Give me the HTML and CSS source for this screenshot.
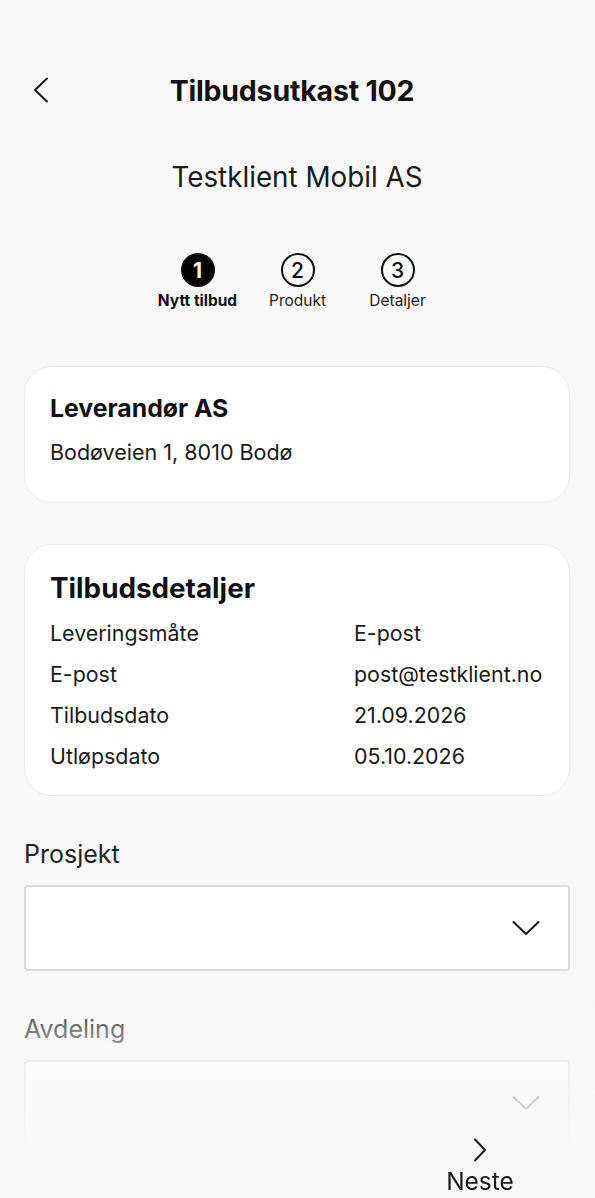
FILE: index.html
```
<!DOCTYPE html>
<html lang="no">
<head>
<meta charset="utf-8">
<title>Tilbudsutkast 102</title>
<link rel="stylesheet" href="styles.css">
</head>
<body>
<div class="page">
  <header class="header">
    <button class="back" aria-label="Tilbake">
      <svg width="16" height="26" viewBox="0 0 16 26"><path d="M14 1.5 L2 13 L14 24.5" fill="none" stroke="#1a1a1a" stroke-width="2" stroke-linecap="round" stroke-linejoin="round"/></svg>
    </button>
    <h1 class="title">Tilbudsutkast 102</h1>
    <span></span>
  </header>

  <div class="client">Testklient Mobil AS</div>

  <div class="steps">
    <div class="step active"><span class="circle">1</span><span class="step-label">Nytt tilbud</span></div>
    <div class="step"><span class="circle">2</span><span class="step-label">Produkt</span></div>
    <div class="step"><span class="circle">3</span><span class="step-label">Detaljer</span></div>
  </div>

  <section class="card supplier">
    <h2 class="card-title small">Leverandør AS</h2>
    <p class="card-text">Bodøveien 1, 8010 Bodø</p>
  </section>

  <section class="card details">
    <h2 class="card-title">Tilbudsdetaljer</h2>
    <dl class="rows">
      <dt>Leveringsmåte</dt><dd>E-post</dd>
      <dt>E-post</dt><dd>post@testklient.no</dd>
      <dt>Tilbudsdato</dt><dd>21.09.2026</dd>
      <dt>Utløpsdato</dt><dd>05.10.2026</dd>
    </dl>
  </section>

  <div class="field">
    <label class="field-label">Prosjekt</label>
    <div class="select">
      <svg width="28" height="16" viewBox="0 0 28 16"><path d="M1.5 2 L14 14 L26.5 2" fill="none" stroke="#1a1a1a" stroke-width="2" stroke-linecap="round" stroke-linejoin="round"/></svg>
    </div>
  </div>

  <div class="field">
    <label class="field-label">Avdeling</label>
    <div class="select">
      <svg width="28" height="16" viewBox="0 0 28 16"><path d="M1.5 2 L14 14 L26.5 2" fill="none" stroke="#1a1a1a" stroke-width="2" stroke-linecap="round" stroke-linejoin="round"/></svg>
    </div>
  </div>
</div>

<div class="fade"></div>
<button class="next">
  <svg width="16" height="24" viewBox="0 0 16 24"><path d="M3 1.5 L13 12 L3 22.5" fill="none" stroke="#1a1a1a" stroke-width="2" stroke-linecap="round" stroke-linejoin="round"/></svg>
  <span>Neste</span>
</button>
</body>
</html>
```
FILE: styles.css
```
* { box-sizing: border-box; }
html, body { margin: 0; padding: 0; }
body {
  background: #f8f8f8;
  font-family: Inter, "Noto Sans", sans-serif;
  color: #1a1a1a;
  width: 595px;
  height: 1198px;
  overflow: hidden;
}
.page { padding: 66px 25px 0 24px; }

.header {
  display: grid;
  grid-template-columns: 60px 1fr 60px;
  align-items: center;
  height: 48px;
}
.back {
  background: none; border: 0; padding: 0 0 0 9px;
  display: flex; align-items: center; height: 48px;
}
.title {
  margin: 0; padding-right: 10px; text-align: center;
  font-size: 28.5px; font-weight: 700; letter-spacing: -0.2px;
  color: #111;
}

.client {
  margin-top: 47px;
  text-align: center;
  font-size: 27.8px; line-height: 32px; font-weight: 400;
}

.steps {
  margin-top: 60px;
  display: flex; justify-content: center;
  padding-left: 1px;
}
.step {
  width: 100px;
  display: flex; flex-direction: column; align-items: center;
}
.circle {
  width: 34px; height: 34px; border-radius: 50%;
  border: 2px solid #111;
  display: flex; align-items: center; justify-content: center;
  font-size: 21px; font-weight: 500; color: #111;
}
.step.active .circle { background: #000; color: #fff; font-weight: 700; }
.step-label { margin-top: 5px; font-size: 15.5px; line-height: 18px; color: #222; }
.step.active .step-label { font-weight: 700; color: #111; }

.card {
  background: #fff;
  border: 1px solid #ebebeb;
  border-radius: 28px;
  padding: 28px 25px 38px;
}
.supplier { margin-top: 56px; }
.details { margin-top: 41px; padding-bottom: 27px; }
.card-title { margin: 0; font-size: 27.8px; line-height: 30px; font-weight: 700; color: #111; }
.card-title.small { font-size: 24.8px; line-height: 26px; }
.card-text { margin: 19px 0 0; font-size: 21.5px; line-height: 24px; }

.rows {
  margin: 18px 0 0;
  display: grid;
  grid-template-columns: 304px 1fr;
  row-gap: 17px;
  font-size: 21.4px; line-height: 24px;
}
.rows dt, .rows dd { margin: 0; }

.field { margin-top: 44px; }
.field-label { display: block; font-size: 25px; line-height: 28px; color: #222; }
.select {
  margin-top: 17px;
  height: 86px;
  background: #fff;
  border: 2px solid #dcdcdc;
  border-radius: 4px;
  display: flex; align-items: center; justify-content: flex-end;
  padding-right: 28px;
}

.fade {
  position: fixed; left: 0; right: 0; bottom: 0;
  height: 200px;
  background: linear-gradient(to bottom,
    rgba(248,248,248,0) 0%,
    rgba(248,248,248,0.45) 18%,
    rgba(248,248,248,0.8) 50%,
    rgba(248,248,248,0.97) 72%,
    #f8f8f8 80%);
}
.next {
  position: fixed; left: 440px; width: 80px; bottom: 2px;
  background: none; border: 0; padding: 0;
  display: flex; flex-direction: column; align-items: center;
  font-family: Inter, "Noto Sans", sans-serif;
  color: #1a1a1a;
}
.next span { font-size: 24.5px; line-height: 30px; margin-top: 4px; }
```
